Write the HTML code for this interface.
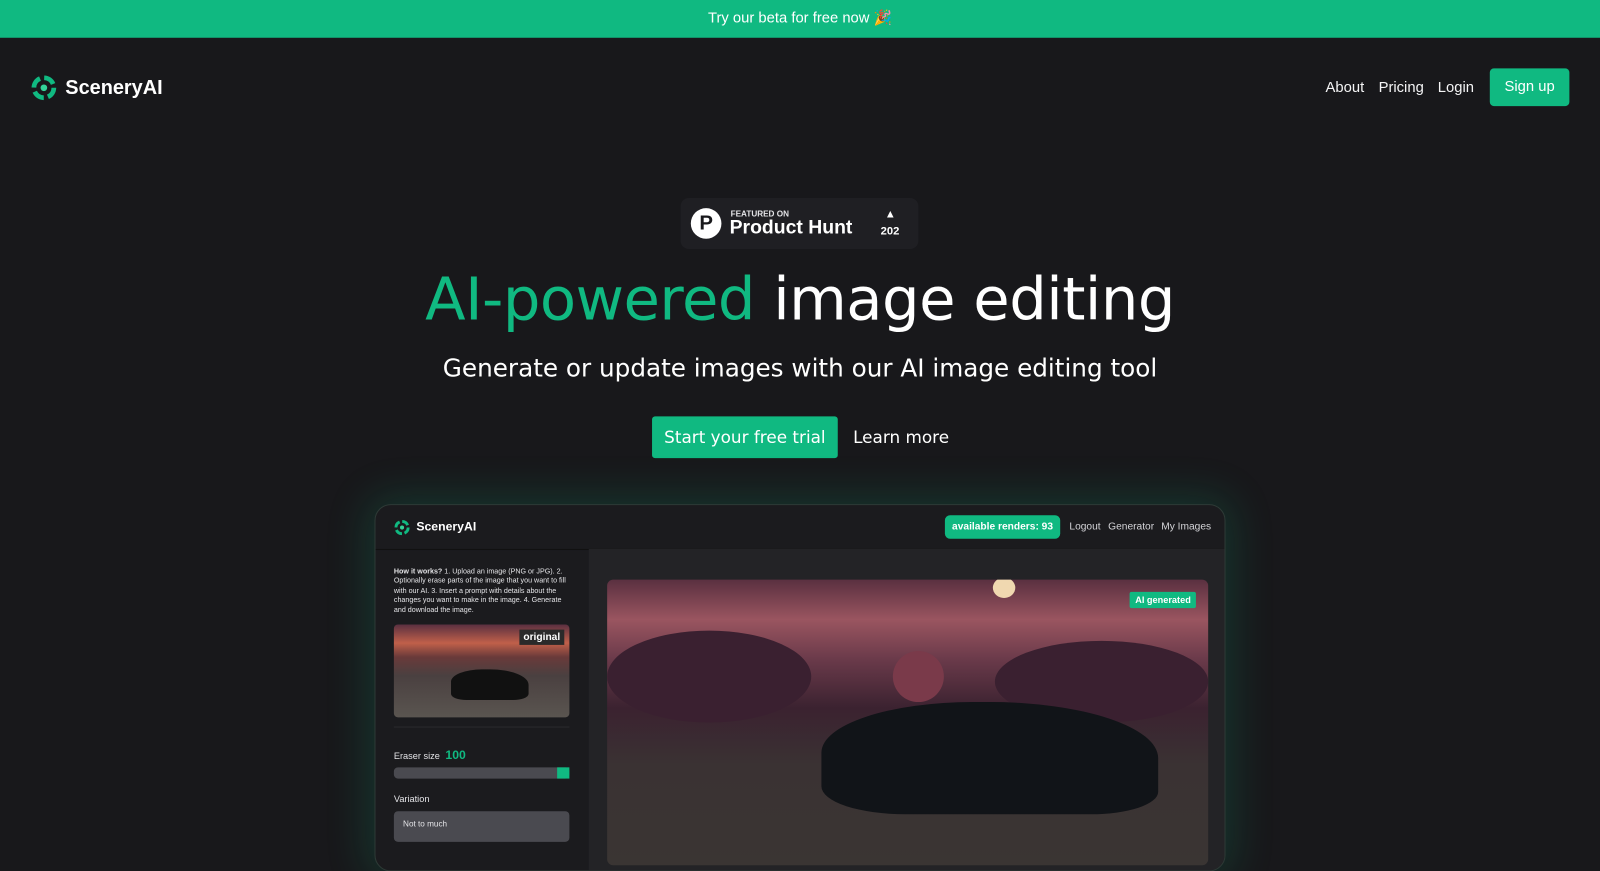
<!DOCTYPE html>
<html><head><style>
*{margin:0;padding:0;box-sizing:border-box}
body{width:1600px;height:834px;overflow:hidden;background:#18181b;font-family:"Liberation Sans","DejaVu Sans",sans-serif;color:#fff;position:relative}
#w{position:absolute;left:0;top:0;width:1568px;height:818px;transform:scale(1.02041);transform-origin:0 0}
.banner{height:37px;background:#10b981;color:#fff;text-align:center;font-size:14.5px;line-height:37px}
.abs{position:absolute}
.nav a{color:#f4f4f5;font-size:14.5px}
.scene{background:linear-gradient(180deg,#5a3040 0%,#9a5560 14%,#6a3a4a 28%,#3b2230 45%,#3a3233 65%,#3a3533 100%)}
</style></head><body><div id="w">
<div class="banner">Try our beta for free now 🎉</div>
<svg class="abs" style="left:30px;top:73px" width="26" height="26" viewBox="0 0 28 28"><circle cx="14" cy="14" r="10.5" fill="none" stroke="#10b981" stroke-width="5" stroke-dasharray="12 4.5"/><circle cx="14" cy="14" r="3.5" fill="#34d399"/></svg>
<div class="abs" style="left:64px;top:75px;font-size:19.5px;font-weight:bold">SceneryAI</div>
<div class="abs nav" style="left:1299px;top:77px"><a>About</a></div>
<div class="abs nav" style="left:1351px;top:77px"><a>Pricing</a></div>
<div class="abs nav" style="left:1409px;top:77px"><a>Login</a></div>
<div class="abs" style="left:1460px;top:67px;width:78px;height:37px;background:#10b981;border-radius:4px;text-align:center;line-height:37px;font-size:14.5px">Sign up</div>

<div class="abs" style="left:667px;top:194px;width:233px;height:50px;background:#1f1f23;border-radius:8px"></div>
<div class="abs" style="left:677px;top:204px;width:30px;height:30px;border-radius:50%;background:#fff;color:#18181b;font-weight:bold;font-size:20px;text-align:center;line-height:30px">P</div>
<div class="abs" style="left:716px;top:205px;font-size:8px;font-weight:bold;color:#e4e4e7">FEATURED ON</div>
<div class="abs" style="left:715px;top:213px;font-size:19px;font-weight:bold">Product Hunt</div>
<div class="abs" style="left:867px;top:204px;font-size:11px">▲</div>
<div class="abs" style="left:863px;top:221px;font-size:11px;font-weight:bold">202</div>

<div class="abs" style="left:0;width:1568px;top:259px;text-align:center;font-size:58px;font-family:'DejaVu Sans',sans-serif;letter-spacing:-0.5px;white-space:nowrap"><span style="color:#10b981">AI-powered</span> image editing</div>
<div class="abs" style="left:0;width:1568px;top:347px;text-align:center;font-size:24.2px;font-family:'DejaVu Sans',sans-serif;white-space:nowrap">Generate or update images with our AI image editing tool</div>
<div class="abs" style="left:639px;top:408px;width:182px;height:41px;background:#10b981;border-radius:3px;text-align:center;line-height:41px;font-size:16.5px;font-family:'DejaVu Sans',sans-serif;white-space:nowrap">Start your free trial</div>
<div class="abs" style="left:836px;top:419px;font-size:16.5px;font-family:'DejaVu Sans',sans-serif">Learn more</div>

<div class="abs" style="left:367px;top:494px;width:834px;height:360px;border-radius:16px;background:#1b1b1e;border:1px solid #2e3a36;box-shadow:0 0 40px 8px rgba(16,185,129,0.18);overflow:hidden">
 <svg class="abs" style="left:18px;top:14px" width="16" height="16" viewBox="0 0 28 28"><circle cx="14" cy="14" r="10.5" fill="none" stroke="#10b981" stroke-width="5" stroke-dasharray="12 4.5"/><circle cx="14" cy="14" r="3.5" fill="#34d399"/></svg>
 <div class="abs" style="left:40px;top:14px;font-size:12px;font-weight:bold">SceneryAI</div>
 <div class="abs" style="left:558px;top:10px;width:113px;height:23px;background:#10b981;border-radius:5px;font-size:10px;font-weight:bold;text-align:center;line-height:23px">available renders: 93</div>
 <div class="abs" style="left:680px;top:16px;font-size:10px;color:#d4d4d8">Logout</div>
 <div class="abs" style="left:718px;top:16px;font-size:10px;color:#d4d4d8">Generator</div>
 <div class="abs" style="left:770px;top:16px;font-size:10px;color:#d4d4d8">My Images</div>
 <div class="abs" style="left:0;top:43px;width:834px;height:1px;background:#111"></div>
 <div class="abs" style="left:209px;top:43px;width:625px;height:320px;background:#232326"></div>
 <div class="abs" style="left:18px;top:61px;width:176px;font-size:7px;line-height:9.4px;color:#e4e4e7"><b>How it works?</b> 1. Upload an image (PNG or JPG). 2. Optionally erase parts of the image that you want to fill with our AI. 3. Insert a prompt with details about the changes you want to make in the image. 4. Generate and download the image.</div>
 <div class="abs" style="left:18px;top:117px;width:172px;height:91px;border-radius:4px;background:linear-gradient(180deg,#5a3040 0%,#c0604a 20%,#6a3a3a 35%,#4a4040 55%,#5a5550 100%)">
  <div class="abs" style="left:56px;top:44px;width:76px;height:30px;background:#111;border-radius:40% 50% 20% 20%"></div>
  <div class="abs" style="right:5px;top:5px;background:#2a2a2a;font-size:10px;font-weight:bold;padding:2px 4px">original</div>
 </div>
 <div class="abs" style="left:18px;top:217px;width:172px;height:1px;background:#2a2a2e"></div>
 <div class="abs" style="left:18px;top:238px;font-size:9px;color:#e4e4e7">Eraser size <span style="color:#10b981;font-size:12px;font-weight:bold;margin-left:3px">100</span></div>
 <div class="abs" style="left:18px;top:257px;width:172px;height:11px;background:#4a4a50;border-radius:4px"></div>
 <div class="abs" style="left:178px;top:257px;width:12px;height:11px;background:#10b981"></div>
 <div class="abs" style="left:18px;top:283px;font-size:9px;color:#e4e4e7">Variation</div>
 <div class="abs" style="left:18px;top:300px;width:172px;height:30px;background:#4a4a50;border-radius:4px;font-size:8px;padding:8px 9px;color:#e4e4e7">Not to much</div>
 <div class="abs scene" style="left:227px;top:73px;width:589px;height:280px;border-radius:6px;overflow:hidden">
  <div class="abs" style="left:378px;top:-2px;width:22px;height:20px;border-radius:50%;background:#f0d8b0"></div>
  <div class="abs" style="left:0;top:50px;width:200px;height:90px;border-radius:50%;background:#3a2030"></div>
  <div class="abs" style="left:380px;top:60px;width:209px;height:80px;border-radius:50%;background:#3a2030"></div>
  <div class="abs" style="left:280px;top:70px;width:50px;height:50px;border-radius:50%;background:#7a3a4a"></div>
  <div class="abs" style="left:210px;top:120px;width:330px;height:110px;background:#111418;border-radius:45% 50% 20% 25%"></div>
  <div class="abs" style="right:12px;top:12px;background:#10b981;font-size:9px;font-weight:bold;padding:3px 5px;border-radius:2px">AI generated</div>
 </div>
</div>
</div></body></html>
